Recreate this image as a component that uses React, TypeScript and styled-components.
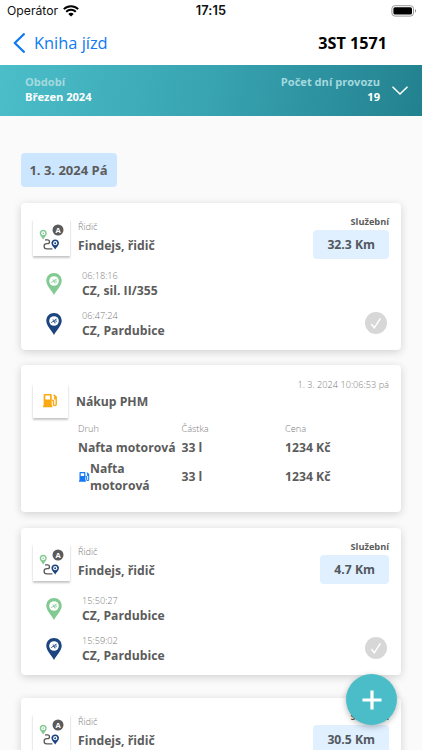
import React from 'react';
import styled, { createGlobalStyle } from 'styled-components';

const GlobalStyle = createGlobalStyle`
  * { box-sizing: border-box; }
  body {
    margin: 0;
    background: #fafafa;
    font-family: 'Open Sans', 'Noto Sans', sans-serif;
    color: #5c5c5c;
    overflow: hidden;
  }
  svg { display: block; flex: none; }
`;

const Screen = styled.div`
  position: relative;
  width: 100%;
  height: 750px;
  overflow: hidden;
  background: #fafafa;
`;

const StatusBar = styled.div`
  display: grid;
  grid-template-columns: 1fr auto 1fr;
  align-items: center;
  height: 22px;
  padding: 0 7px;
  background: #fff;
  color: #111;
  font: 400 12.2px/22px Inter, sans-serif;
`;

const Carrier = styled.div`
  display: flex;
  align-items: center;
  gap: 5px;
`;

const Clock = styled.div`
  font-size: 12.8px;
  font-weight: 600;
  letter-spacing: 0.1px;
`;

const BatterySlot = styled.div`
  display: flex;
  justify-content: flex-end;
  margin-right: -2px;
`;

const NavBar = styled.header`
  display: flex;
  align-items: center;
  justify-content: space-between;
  height: 43px;
  padding: 0 35px 1px 13px;
  background: #fff;
`;

const Back = styled.div`
  display: flex;
  align-items: center;
  gap: 9px;
  color: #0f7af2;
  font-size: 16.4px;
  line-height: 24px;
`;

const Plate = styled.h1`
  margin: 0;
  color: #000;
  font-size: 16.2px;
  line-height: 24px;
  font-weight: 700;
`;

const Summary = styled.section`
  display: flex;
  align-items: center;
  height: 51px;
  padding: 0 14px 0 25px;
  background: linear-gradient(100deg, #4bbec9 0%, #38a3b1 50%, #23818f 100%);
`;

const SummaryItem = styled.div<{ $end?: boolean }>`
  flex: ${(p) => (p.$end ? 'none' : '1')};
  text-align: ${(p) => (p.$end ? 'right' : 'left')};
  margin-right: ${(p) => (p.$end ? '12px' : '0')};
  padding-bottom: 4px;
  color: #fff;
  font-size: 11.1px;
  line-height: 15px;
  font-weight: 700;
`;

const SummaryLabel = styled.div`
  color: #a4d9df;
`;

const Content = styled.main`
  display: flex;
  flex-direction: column;
  align-items: flex-start;
  padding: 37px 21px 0;
`;

const DayChip = styled.div`
  height: 34px;
  width: 96px;
  margin-bottom: 16px;
  padding-right: 1px;
  border-radius: 4px;
  background: #cce6ff;
  font-size: 13px;
  line-height: 35px;
  font-weight: 700;
  text-align: center;
  white-space: nowrap;
`;

const Card = styled.article<{ $gap: number; $top?: number }>`
  flex: none;
  width: 380px;
  height: 147px;
  margin-bottom: ${(p) => p.$gap}px;
  padding: ${(p) => p.$top ?? 12}px 12px 0;
  border-radius: 4px;
  background: #fff;
  box-shadow: 0 2px 9px rgba(0, 0, 0, 0.17);
`;

const CardHead = styled.div`
  display: flex;
  align-items: flex-start;
`;

const Tile = styled.div<{ $compact?: boolean }>`
  display: flex;
  align-items: center;
  justify-content: center;
  width: ${(p) => (p.$compact ? 35 : 37)}px;
  height: ${(p) => (p.$compact ? 34 : 37)}px;
  margin-top: ${(p) => (p.$compact ? 6 : 4)}px;
  background: #fff;
  box-shadow: 0 2px 2px rgba(0, 0, 0, 0.2), 0 1px 2px rgba(0, 0, 0, 0.06);
`;

const Driver = styled.div`
  flex: 1;
  margin: 4px 0 0 8px;
`;

const Caption = styled.div<{ $lh: number }>`
  color: #7c7c7c;
  font-size: 9.2px;
  line-height: ${(p) => p.$lh}px;
  font-weight: 300;
`;

const Strong = styled.div<{ $lh: number }>`
  font-size: 12.2px;
  line-height: ${(p) => p.$lh}px;
  font-weight: 700;
  white-space: nowrap;
`;

const TripInfo = styled.div`
  display: flex;
  flex-direction: column;
  align-items: flex-end;
`;

const Purpose = styled.div`
  font-size: 9.2px;
  line-height: 14px;
  font-weight: 700;
`;

const Distance = styled.div`
  height: 29px;
  margin-top: 1px;
  padding: 0 14px;
  border-radius: 4px;
  background: #e0f0ff;
  color: #53585d;
  font-size: 12.2px;
  line-height: 29px;
  font-weight: 700;
`;

const Stops = styled.div`
  display: flex;
  flex-direction: column;
  gap: 10px;
  padding: 9px 2px 0 13px;
`;

const StopRow = styled.div`
  display: flex;
  align-items: center;
  height: 30px;
`;

const PinSlot = styled.div`
  padding-top: 2px;
`;

const StopText = styled.div`
  flex: 1;
  margin: 3px 0 0 20px;
`;

const FuelTitle = styled.div`
  flex: 1;
  margin: 14px 0 0 8px;
`;

const FuelDate = styled.div`
  color: #7c7c7c;
  font-size: 9.2px;
  line-height: 14px;
  font-weight: 300;
`;

const FuelTable = styled.div`
  display: grid;
  grid-template-columns: 103.5px 103.5px 1fr;
  align-items: center;
  margin: 3px 0 0 45px;
`;

const FuelKind = styled.div`
  display: flex;
  align-items: center;
  height: 36px;
  padding-left: 1px;
  font-size: 12.2px;
  line-height: 17px;
  font-weight: 700;
`;

const AddButton = styled.button`
  position: absolute;
  right: 25px;
  bottom: 25px;
  display: flex;
  align-items: center;
  justify-content: center;
  width: 51px;
  height: 51px;
  padding: 0;
  border: 0;
  border-radius: 50%;
  background: #4bbdc8;
  box-shadow: 0 2px 6px rgba(0, 0, 0, 0.28);
`;

const GREEN = '#82c992';
const NAVY = '#1c4580';

const Pin = ({ color }: { color: string }) => (
  <svg width="16" height="22" viewBox="0 0 16 22">
    <path d="M8 0C3.5 0 .3 3.4.3 7.7.3 12.5 5.2 16.7 8 22c2.8-5.3 7.7-9.5 7.7-14.3C15.7 3.4 12.5 0 8 0Z" fill={color} />
    <circle cx="8" cy="8" r="4.8" fill="#fff" />
    <path d="M5 9.8 10.8 6M7 6.3l2.1 4.2M6.5 8.3l3.7.9M9 5.9l1.7 3" stroke={color} strokeWidth="0.7" fill="none" />
  </svg>
);

const RouteIcon = () => (
  <svg width="37" height="37" viewBox="0 0 37 37">
    <path d="M12 20.8h2.4c2.8 0 2.8 3.9 0 3.9h-.6c-3.6 0-3.6 5.2 0 5.2h5.6" fill="none" stroke="#595959" strokeWidth="1.3" />
    <path d="M10.2 10.7c-2 0-3.5 1.5-3.5 3.5 0 2.4 2.3 3.8 3.5 6.4 1.2-2.6 3.5-4 3.5-6.4 0-2-1.5-3.5-3.5-3.5Z" fill={GREEN} />
    <circle cx="10.2" cy="14.2" r="2" fill="#fff" />
    <circle cx="10.2" cy="14.2" r="0.8" fill={GREEN} />
    <path d="M22.2 20.4c-2.2 0-3.8 1.6-3.8 3.7 0 2.5 2.4 3.9 3.8 6.5 1.4-2.6 3.8-4 3.8-6.5 0-2.1-1.6-3.7-3.8-3.7Z" fill={NAVY} />
    <circle cx="22.2" cy="24.2" r="2.1" fill="#fff" />
    <circle cx="22.2" cy="24.2" r="1" fill={NAVY} />
    <circle cx="25" cy="11" r="5.5" fill="#5b5b5b" />
    <text x="25" y="13.7" textAnchor="middle" fontFamily="Open Sans" fontSize="7.5" fontWeight="700" fill="#fff">A</text>
  </svg>
);

const FuelIcon = ({ color, size }: { color: string; size: number }) => (
  <svg width={size} height={size * 0.9} viewBox="0 0 16 14.4">
    <path fillRule="evenodd" fill={color} d="M1.7 0h6.6c.6 0 1 .4 1 1v11.3h.8v1.9H0v-1.9h.7V1c0-.6.4-1 1-1Zm.8 1.7v4.2h5V1.7Z" />
    <path d="M9.3 6.6h.9c.7 0 1 .4 1 1v3.2c0 2 2.9 2 2.9 0V3.2L11.3.9m2.8 4.2h-1.5V2.5" fill="none" stroke={color} strokeWidth="1.5" />
  </svg>
);

const CheckIcon = () => (
  <svg width="22" height="22" viewBox="0 0 22 22">
    <circle cx="11" cy="11" r="11" fill="#d7d7d7" />
    <path d="m6.3 12 3 3.8 6.1-9.5" fill="none" stroke="#fff" strokeWidth="1.5" />
  </svg>
);

type Stop = { time: string; place: string };
type TripProps = { distance: string; stops: Stop[]; gap: number };

const TripCard = ({ distance, stops, gap }: TripProps) => (
  <Card $gap={gap}>
    <CardHead>
      <Tile><RouteIcon /></Tile>
      <Driver>
        <Caption $lh={16}>Řidič</Caption>
        <Strong $lh={21}>Findejs, řidič</Strong>
      </Driver>
      <TripInfo>
        <Purpose>Služební</Purpose>
        <Distance>{distance}</Distance>
      </TripInfo>
    </CardHead>
    <Stops>
      {stops.map((stop, i) => (
        <StopRow key={stop.time}>
          <PinSlot><Pin color={i === 0 ? GREEN : NAVY} /></PinSlot>
          <StopText>
            <Caption $lh={12}>{stop.time}</Caption>
            <Strong $lh={17}>{stop.place}</Strong>
          </StopText>
          {i === 1 && <CheckIcon />}
        </StopRow>
      ))}
    </Stops>
  </Card>
);

export default function App() {
  return (
    <Screen>
      <GlobalStyle />
      <StatusBar>
        <Carrier>
          Operátor
          <svg width="16" height="12" viewBox="0 0 16 12">
            <path d="M.8 4.1C4.9.2 11.1.2 15.2 4.1M3.2 6.7c2.7-2.6 6.9-2.6 9.6 0" fill="none" stroke="#000" strokeWidth="2" />
            <path d="M5.3 8.9c1.5-1.4 3.9-1.4 5.4 0L8 11.6Z" />
          </svg>
        </Carrier>
        <Clock>17:15</Clock>
        <BatterySlot>
          <svg width="26" height="12" viewBox="0 0 26 12">
            <rect x="0.9" y="0.7" width="21.6" height="10.4" rx="3" fill="none" stroke="#999" />
            <rect x="2.4" y="2.2" width="18.6" height="7.4" rx="1.6" />
            <path d="M24 4.1c1.3.5 1.3 3.1 0 3.6Z" fill="#888" />
          </svg>
        </BatterySlot>
      </StatusBar>
      <NavBar>
        <Back>
          <svg width="12" height="20" viewBox="0 0 12 20">
            <path d="m10.8 1.2-9 8.8 9 8.8" fill="none" stroke="#0f7af2" strokeWidth="2.3" strokeLinecap="round" strokeLinejoin="round" />
          </svg>
          Kniha jízd
        </Back>
        <Plate>3ST 1571</Plate>
      </NavBar>
      <Summary>
        <SummaryItem>
          <SummaryLabel>Období</SummaryLabel>
          Březen 2024
        </SummaryItem>
        <SummaryItem $end>
          <SummaryLabel>Počet dní provozu</SummaryLabel>
          19
        </SummaryItem>
        <svg width="16" height="10" viewBox="0 0 16 10">
          <path d="M1 1.2 8 8l7-6.8" fill="none" stroke="#fff" strokeWidth="1.6" strokeLinecap="round" />
        </svg>
      </Summary>
      <Content>
        <DayChip>1. 3. 2024 Pá</DayChip>
        <TripCard
          distance="32.3 Km"
          gap={15}
          stops={[{ time: '06:18:16', place: 'CZ, sil. II/355' }, { time: '06:47:24', place: 'CZ, Pardubice' }]}
        />
        <Card $gap={16} $top={13}>
          <CardHead>
            <Tile $compact><FuelIcon color="#fba912" size={15} /></Tile>
            <FuelTitle><Strong $lh={20}>Nákup PHM</Strong></FuelTitle>
            <FuelDate>1. 3. 2024 10:06:53 pá</FuelDate>
          </CardHead>
          <FuelTable>
            <Caption $lh={16}>Druh</Caption>
            <Caption $lh={16}>Částka</Caption>
            <Caption $lh={16}>Cena</Caption>
            <Strong $lh={22}>Nafta motorová</Strong>
            <Strong $lh={22}>33 l</Strong>
            <Strong $lh={22}>1234 Kč</Strong>
            <FuelKind>
              <FuelIcon color="#1479f5" size={11} />
              <span>Nafta<br />motorová</span>
            </FuelKind>
            <Strong $lh={36}>33 l</Strong>
            <Strong $lh={36}>1234 Kč</Strong>
          </FuelTable>
        </Card>
        <TripCard
          distance="4.7 Km"
          gap={23}
          stops={[{ time: '15:50:27', place: 'CZ, Pardubice' }, { time: '15:59:02', place: 'CZ, Pardubice' }]}
        />
        <TripCard distance="30.5 Km" gap={0} stops={[]} />
      </Content>
      <AddButton aria-label="+">
        <svg width="20" height="20" viewBox="0 0 20 20">
          <path d="M10 .5v19M.5 10h19" stroke="#fff" strokeWidth="3.2" />
        </svg>
      </AddButton>
    </Screen>
  );
}
